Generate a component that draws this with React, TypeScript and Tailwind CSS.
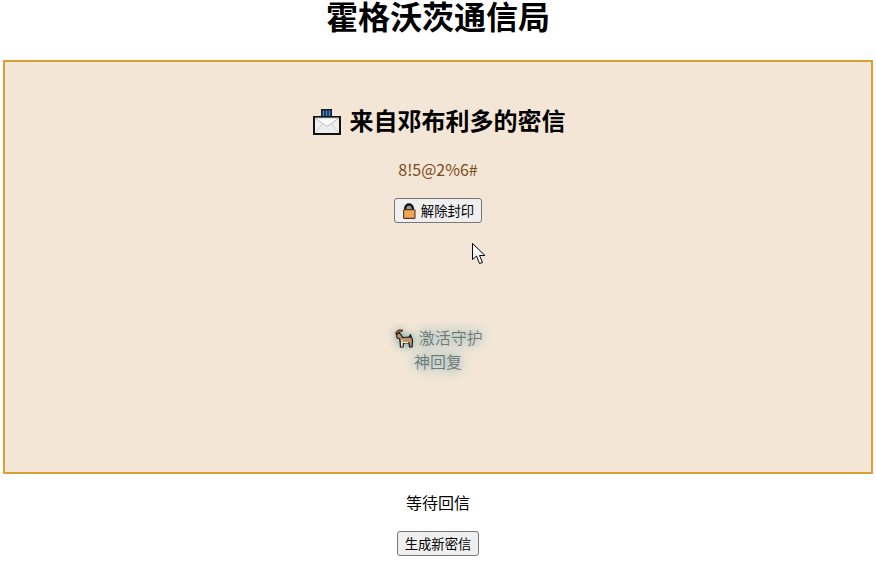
const cjk = "font-['Noto_Sans_CJK_SC','Noto_Sans',sans-serif]";

function Cursor() {
  return (
    <svg className="absolute left-[472px] top-[243px]" width="14" height="21" viewBox="0 0 14 21">
      <path d="M0.5 0.5V16.5L4.5 13L7.5 20.5L10.5 19.5L7.5 12.5H13L0.5 0.5Z" fill="#fff" stroke="#000" strokeWidth="1" />
    </svg>
  );
}

function EnvelopeIcon() {
  return (
    <svg width="28" height="27" viewBox="0 0 28 27" className="shrink-0">
      <rect x="8" y="1" width="11" height="9" fill="#1c1c1c" />
      <path d="M10.5 2.5V8M13.5 2.5V8M16.5 2.5V8" stroke="#2f8be0" strokeWidth="1.7" />
      <rect x="1" y="9" width="26" height="17" fill="#eeeeee" stroke="#111" strokeWidth="2" />
      <path d="M2 10L14 18.5L26 10Z" fill="#fcfcfc" stroke="#bdbdbd" strokeWidth="1" />
      <path d="M2 25L10 15.5M26 25L18 15.5" stroke="#cfcfcf" strokeWidth="1" />
    </svg>
  );
}

function LockIcon() {
  return (
    <svg width="14" height="16" viewBox="0 0 14 16" className="shrink-0">
      <path d="M3.2 9V5.5C3.2 3 5 1.5 7 1.5S10.8 3 10.8 5.5V9" fill="#9a9a9a" stroke="#161616" strokeWidth="2.4" />
      <rect x="1.6" y="6.6" width="11.4" height="8.8" rx="1" fill="#f2a650" stroke="#4a3a28" strokeWidth="1.1" />
    </svg>
  );
}

function GoatIcon() {
  return (
    <svg width="20" height="20" viewBox="0 0 20 20" className="mr-[1px] ml-[1px] inline-block align-[-4px] [filter:drop-shadow(0_0_4px_#5f9ea0)]">
      <path d="M1.5 5.5C2.5 2 6 0.8 9 2.5L7.5 3.8C6 3.2 4.6 3.6 4 5.5Z" fill="#c8501e" stroke="#2a1a10" strokeWidth="0.8" />
      <path d="M2.5 6.5L5.5 4.8L7.5 7.5L8.5 9.5L16 9C18 9 18.5 11 18.5 13L18 19H15.5L15 15H9.5L9 19H6.5L6 13L5.5 10.5L3 10Z" fill="#c09368" stroke="#181818" strokeWidth="1.2" strokeLinejoin="round" />
      <path d="M14.5 8.8L16.5 5.5L18 9" fill="#1a1a1a" />
      <path d="M7 12H9V15H14V14H9Z" fill="#f3ead8" />
      <path d="M7 13.5H8.6V18.5H7Z" fill="#f0e6d8" />
    </svg>
  );
}

export default function App() {
  return (
    <div className={`relative flex h-[576px] flex-col items-center overflow-hidden bg-white px-[3px] text-black ${cjk}`}>
      <h1 className="h-[60px] text-[32px] leading-[30px] font-bold">霍格沃茨通信局</h1>

      <div className="flex h-[414px] w-[870px] flex-col items-center border-2 border-[#daa033] bg-[#f3e6d6] pt-[46px]">
        <h2 className="flex h-[27px] items-center gap-[9px] pl-[2px] text-[24px] leading-[27px] font-bold">
          <EnvelopeIcon />
          <span className="pb-[4px]">来自邓布利多的密信</span>
        </h2>
        <p className="mt-[22px] text-[16px] leading-[24px] text-[#7a4a1a]">8!5@2%6#</p>
        <button className="mt-[17px] flex h-[25px] items-center gap-[5px] rounded-[3px] border border-[#767676] bg-[#efefef] px-[7px] text-[13.33px] leading-none">
          <LockIcon />
          <span>解除封印</span>
        </button>
        <p className="mt-[102px] w-[100px] text-center text-[16px] leading-[24px] text-[#00000070] [text-shadow:0_0_12px_#4f9fb0]">
          <GoatIcon /> 激活守护神回复
        </p>
      </div>

      <p className="mt-[16px] text-[16px] leading-[24px]">等待回信</p>
      <button className="mt-[17px] h-[25px] rounded-[3px] border border-[#767676] bg-[#efefef] px-[7px] text-[13.33px] leading-none">
        生成新密信
      </button>

      <Cursor />
    </div>
  );
}
